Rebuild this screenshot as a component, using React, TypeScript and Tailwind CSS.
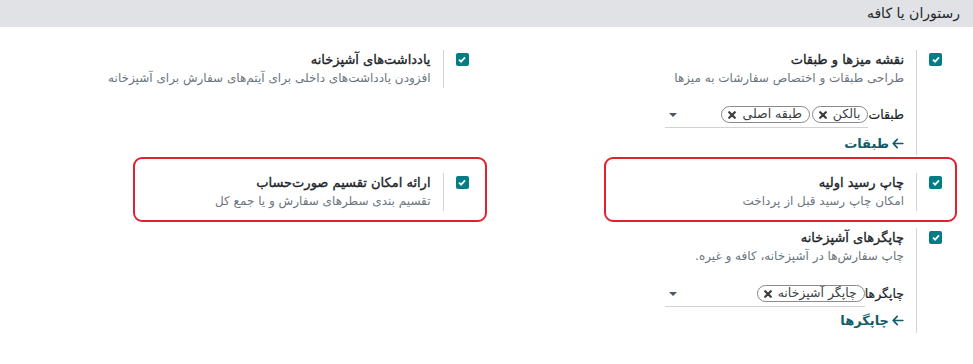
import React from "react";

const FONT = { fontFamily: '"DejaVu Sans", "Noto Sans", sans-serif' };

function Check() {
  return (
    <div className="w-[13px] h-[13px] shrink-0 rounded-[2px] bg-[#017e84] flex items-center justify-center">
      <svg width="8" height="7" viewBox="0 0 8 7">
        <path d="M1 3.6 L3.1 5.6 L7 1.4" stroke="#fff" strokeWidth="1.8" fill="none" />
      </svg>
    </div>
  );
}

function XIcon() {
  return (
    <svg width="8" height="8" viewBox="0 0 8 8" className="shrink-0">
      <path d="M1.2 1.2 L6.8 6.8 M6.8 1.2 L1.2 6.8" stroke="#3d3d3d" strokeWidth="2.2" strokeLinecap="round" />
    </svg>
  );
}

function Arrow() {
  return (
    <svg width="12" height="13" viewBox="0 0 448 512" className="shrink-0">
      <path
        fill="#0f5d66"
        d="M9.4 233.4c-12.5 12.5-12.5 32.8 0 45.3l160 160c12.5 12.5 32.8 12.5 45.3 0s12.5-32.8 0-45.3L109.2 288 416 288c17.7 0 32-14.3 32-32s-14.3-32-32-32l-306.7 0L214.6 118.6c12.5-12.5 12.5-32.8 0-45.3s-32.8-12.5-45.3 0l-160 160z"
      />
    </svg>
  );
}

function Tag({ label }: { label: string }) {
  return (
    <div className="h-[17px] rounded-full border border-[#8a8a8a] pr-[7px] pl-[6px] flex items-center gap-[6px] text-[12.5px] leading-none text-[#3a3f44] whitespace-nowrap">
      <span>{label}</span>
      <XIcon />
    </div>
  );
}

function Caret() {
  return (
    <svg width="8" height="4" viewBox="0 0 8 4" className="shrink-0">
      <path d="M0 0 L8 0 L4 4 Z" fill="#4b5563" />
    </svg>
  );
}

function Field({ label, tags, width }: { label: string; tags: string[]; width: string }) {
  return (
    <div className="flex items-center h-[26px]">
      <span className="text-[12.5px] text-[#212529] whitespace-nowrap [-webkit-text-stroke:0.2px_#212529]">{label}</span>
      <div className={`${width} h-[26px] border-b border-[#cfd2d6] flex items-center justify-between pr-0 pl-[4px]`}>
        <div className="flex items-center gap-[2px]">
          {tags.map((t) => (
            <Tag key={t} label={t} />
          ))}
        </div>
        <Caret />
      </div>
    </div>
  );
}

function LinkBtn({ label }: { label: string }) {
  return (
    <div className="flex items-center gap-[3px] h-[19px] text-[13px] font-bold text-[#0f5d66]">
      <Arrow />
      <span>{label}</span>
    </div>
  );
}

function Setting({
  title,
  desc,
  children,
  className = "",
}: {
  title: string;
  desc: string;
  children?: React.ReactNode;
  className?: string;
}) {
  return (
    <div className={`relative flex items-start pr-[18px] ${className}`}>
      <div className="pt-[3px] ml-[12px]">
        <Check />
      </div>
      <div className="border-r border-[#d3d5d8] pr-[12px]">
        <div className="text-[13px] leading-[19px] text-[#212529] [-webkit-text-stroke:0.35px_#212529]">{title}</div>
        <div className="text-[12px] leading-[19px] text-[#6c757d]">{desc}</div>
        {children}
      </div>
    </div>
  );
}

export default function App() {
  return (
    <div dir="rtl" className="w-[973px] h-[364px] bg-white overflow-hidden" style={FONT}>
      <div className="h-[27px] bg-[#e1e2e6] px-[13px] flex items-center text-[14px] text-[#212529]">
        رستوران یا کافه
      </div>
      <div className="grid grid-cols-2 px-[13px] pt-[23px]">
        <Setting title="نقشه میزها و طبقات" desc="طراحی طبقات و اختصاص سفارشات به میزها">
          <div className="mt-[14px]">
            <Field label="طبقات" tags={["بالکن", "طبقه اصلی"]} width="w-[203px]" />
          </div>
          <div className="mt-[6px] pb-[2px]">
            <LinkBtn label="طبقات" />
          </div>
        </Setting>
        <Setting
          title="یادداشت‌های آشپزخانه"
          desc="افزودن یادداشت‌های داخلی برای آیتم‌های سفارش برای آشپزخانه"
        />

        <div className="relative mt-[18px]">
          <Setting title="چاپ رسید اولیه" desc="امکان چاپ رسید قبل از پرداخت" className="pb-[1px]" />
          <div className="pointer-events-none absolute top-[-16px] bottom-[-10px] right-[3px] left-[117px] border-2 border-[#e2202f] rounded-[9px]" />
        </div>
        <div className="relative mt-[18px]">
          <Setting title="ارائه امکان تقسیم صورت‌حساب" desc="تقسیم بندی سطرهای سفارش و یا جمع کل" className="pb-[1px]" />
          <div className="pointer-events-none absolute top-[-16px] bottom-[-10px] right-0 left-[120px] border-2 border-[#e2202f] rounded-[9px]" />
        </div>

        <div className="mt-[16px]">
          <Setting title="چاپگرهای آشپزخانه" desc="چاپ سفارش‌ها در آشپزخانه، کافه و غیره.">
            <div className="mt-[15px]">
              <Field label="چاپگرها" tags={["چاپگر آشپزخانه"]} width="w-[200px]" />
            </div>
            <div className="mt-[4px] pb-[3px]">
              <LinkBtn label="چاپگرها" />
            </div>
          </Setting>
        </div>
        <div />
      </div>
    </div>
  );
}
